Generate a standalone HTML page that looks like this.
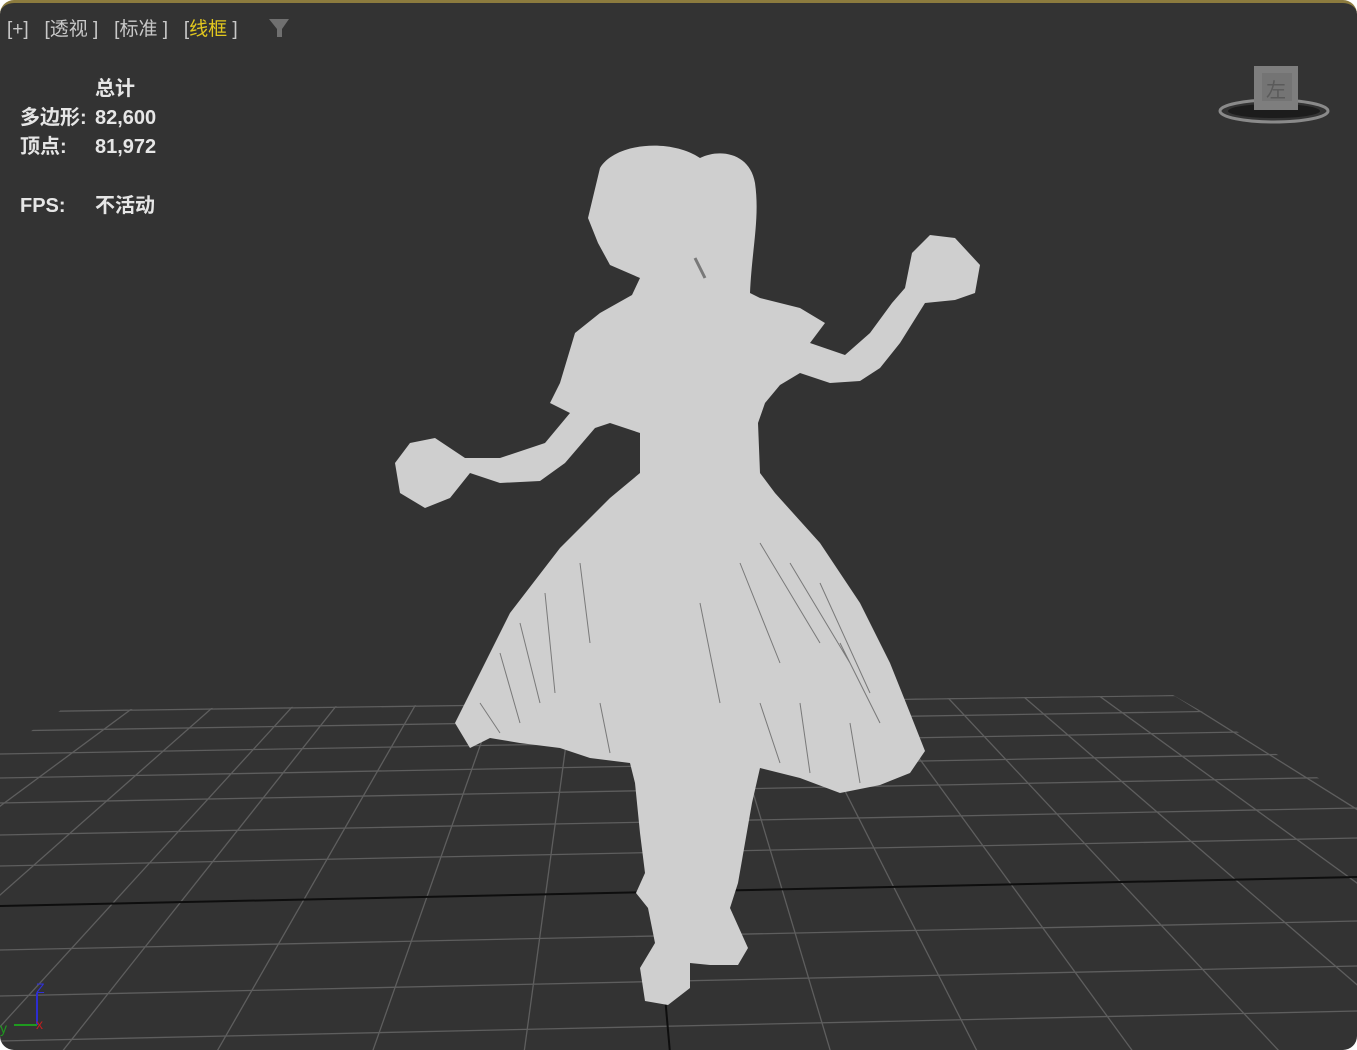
<!DOCTYPE html>
<html><head><meta charset="utf-8"><style>
html,body{margin:0;padding:0;background:#fff;width:1357px;height:1050px;overflow:hidden}
#vp{position:absolute;left:0;top:0;width:1357px;height:1050px;background:#333333;border-radius:14px;overflow:hidden;box-sizing:border-box;border-top:3px solid #8c7b3e}
.t{position:absolute;font-family:"Liberation Sans","Noto Sans CJK SC",sans-serif;color:#e6e6e6;font-size:20px;white-space:nowrap;line-height:24px}
.m{color:#c8c8c8;font-size:19px;font-weight:normal}
svg{position:absolute;left:0;top:0}
</style></head><body>
<div id="vp">
<svg width="1357" height="1050" viewBox="0 0 1357 1050">
<defs><clipPath id="g"><polygon points="61,707 1173,692 1357,797 1357,1050 0,1050 0,750"/></clipPath></defs>
<g clip-path="url(#g)" stroke="#5e5e5e" stroke-width="1.3">
<line x1="0" y1="709" x2="1357" y2="690"/>
<line x1="0" y1="728" x2="1357" y2="706"/>
<line x1="0" y1="751" x2="1357" y2="727"/>
<line x1="0" y1="775" x2="1357" y2="750"/>
<line x1="0" y1="800" x2="1357" y2="774"/>
<line x1="0" y1="832" x2="1357" y2="805"/>
<line x1="0" y1="863" x2="1357" y2="835"/>
<line x1="0" y1="947" x2="1357" y2="918"/>
<line x1="0" y1="993" x2="1357" y2="963"/>
<line x1="0" y1="1038" x2="1357" y2="1008"/>
<line x1="620" y1="345" x2="-954" y2="1050"/>
<line x1="620" y1="345" x2="-799" y2="1050"/>
<line x1="620" y1="345" x2="-644" y2="1050"/>
<line x1="620" y1="345" x2="-489" y2="1050"/>
<line x1="620" y1="345" x2="-334" y2="1050"/>
<line x1="620" y1="345" x2="-179" y2="1050"/>
<line x1="620" y1="345" x2="-24" y2="1050"/>
<line x1="620" y1="345" x2="61" y2="1050"/>
<line x1="620" y1="345" x2="216" y2="1050"/>
<line x1="620" y1="345" x2="372" y2="1050"/>
<line x1="620" y1="345" x2="524" y2="1050"/>
<line x1="620" y1="345" x2="831" y2="1050"/>
<line x1="620" y1="345" x2="978" y2="1050"/>
<line x1="620" y1="345" x2="1134" y2="1050"/>
<line x1="620" y1="345" x2="1281" y2="1050"/>
<line x1="620" y1="345" x2="1436" y2="1050"/>
<line x1="620" y1="345" x2="1591" y2="1050"/>
<line x1="620" y1="345" x2="1746" y2="1050"/>
<line x1="620" y1="345" x2="1901" y2="1050"/>
<line x1="620" y1="345" x2="2056" y2="1050"/>
<line x1="620" y1="345" x2="2211" y2="1050"/>
<line x1="0" y1="903" x2="1357" y2="874" stroke="#0e0e0e" stroke-width="2"/>
<line x1="655" y1="880" x2="670" y2="1050" stroke="#0e0e0e" stroke-width="2"/>
</g>
<g fill="#cfcfcf">
<path d="M600,165 C615,140 670,135 700,155 C720,145 750,150 755,180 C760,215 752,245 750,290 L760,295 L800,305 L825,320 L810,340 L845,352 L870,330 L892,300 L905,285 L912,250 L930,232 L955,235 L980,262 L975,290 L955,297 L925,300 L900,340 L880,365 L860,378 L830,380 L800,370 L780,382 L765,400 L758,420 L760,470 L775,490 L820,540 L860,600 L890,660 L910,710 L925,748 L910,770 L880,782 L840,790 L800,775 L760,765 L752,800 L745,840 L738,880 L730,905 L748,945 L738,962 L710,962 L690,960 L690,985 L668,1002 L645,998 L640,965 L655,940 L648,905 L636,890 L645,870 L640,830 L635,780 L630,760 L590,755 L560,745 L520,740 L490,735 L470,745 L455,720 L480,670 L510,610 L560,545 L610,495 L640,470 L640,430 L610,420 L595,425 L565,460 L540,478 L500,480 L470,470 L450,495 L425,505 L400,490 L395,460 L410,440 L435,435 L465,455 L500,455 L545,440 L570,410 L550,400 L560,380 L575,330 L600,310 L632,292 L640,275 L610,262 L598,240 L588,215 Z"/>
</g>
<g stroke="#333" stroke-width="1" opacity="0.55" fill="none">
<path d="M500,650 L520,720 M520,620 L540,700 M545,590 L555,690 M700,600 L720,700 M740,560 L780,660 M760,540 L820,640 M790,560 L850,660 M820,580 L870,690 M840,640 L880,720 M600,700 L610,750 M760,700 L780,760 M800,700 L810,770 M850,720 L860,780 M480,700 L500,730 M580,560 L590,640"/>
<path d="M695,255 L705,275" stroke-width="3"/>
</g>
<ellipse cx="1274" cy="108" rx="54" ry="11" fill="none" stroke="#8a8a8a" stroke-width="3"/>
<ellipse cx="1274" cy="108" rx="46" ry="7" fill="#1c1c1c"/>
<rect x="1254" y="63" width="44" height="44" fill="#7e7e7e"/>
<rect x="1262" y="70" width="30" height="28" fill="#747474"/>
<text x="1276" y="94" font-family="Liberation Sans,Noto Sans CJK SC,sans-serif" font-size="20" fill="#5a5a5a" text-anchor="middle">左</text>
<line x1="37" y1="1022" x2="37" y2="990" stroke="#2d2dd0" stroke-width="2"/>
<line x1="37" y1="1022" x2="14" y2="1022" stroke="#1f9a1f" stroke-width="2"/>
<text x="36" y="990" font-family="Liberation Sans,sans-serif" font-size="14" fill="#3030d8">Z</text>
<text x="0" y="1030" font-family="Liberation Sans,sans-serif" font-size="14" fill="#1f9a1f">y</text>
<text x="36" y="1026" font-family="Liberation Sans,sans-serif" font-size="14" fill="#c02020">x</text>
<path d="M269,16 L289,16 L282,26 L282,34 L277,34 L277,26 Z" fill="#707070"/>
</svg>
<div class="t m" style="left:7px;top:15px">[+]&nbsp;&nbsp;&nbsp;[透视 ]&nbsp;&nbsp;&nbsp;[标准 ]&nbsp;&nbsp;&nbsp;[<span style="color:#e3c81e">线框</span> ]</div>
<div class="t" style="left:95px;top:74px;font-weight:bold">总计</div>
<div class="t" style="left:20px;top:103px;font-weight:bold">多边形:</div>
<div class="t" style="left:95px;top:103px;font-weight:bold">82,600</div>
<div class="t" style="left:20px;top:132px;font-weight:bold">顶点:</div>
<div class="t" style="left:95px;top:132px;font-weight:bold">81,972</div>
<div class="t" style="left:20px;top:191px;font-weight:bold">FPS:</div>
<div class="t" style="left:95px;top:191px;font-weight:bold">不活动</div>
</div>
</body></html>
